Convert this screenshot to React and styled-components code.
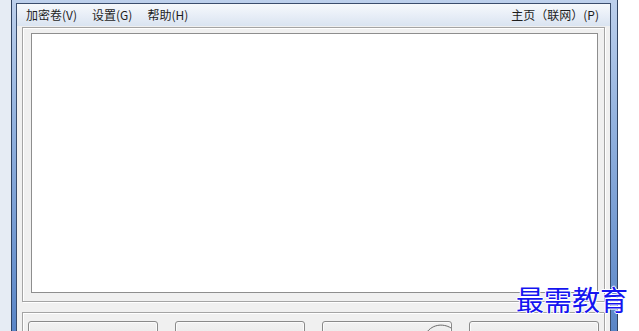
import React from "react";
import styled, { createGlobalStyle } from "styled-components";

const GlobalStyle = createGlobalStyle`
  *, *::before, *::after {
    box-sizing: border-box;
  }
  html, body {
    margin: 0;
    padding: 0;
    background: #ffffff;
    overflow: hidden;
  }
  body {
    font-family: "Noto Sans CJK SC", "Liberation Sans", sans-serif;
  }
`;

const Page = styled.div`
  position: relative;
  display: flex;
  width: 639px;
  height: 331px;
  overflow: hidden;
  background: #ffffff;
`;

const Desk = styled.div`
  width: ${(p) => p.$w}px;
  flex-shrink: 0;
  background: ${(p) => p.$bg};
`;

const Frame = styled.div`
  width: 607px;
  height: 340px;
  flex-shrink: 0;
  padding: 3px 6px 0 4px;
  border: 1px solid #2f4260;
  border-top: none;
  background: linear-gradient(180deg, #bdd0ec 0%, #94b3df 35%, #5884c6 100%);
`;

const Client = styled.div`
  height: 100%;
  display: flex;
  flex-direction: column;
  border: 1px solid #3a4d6c;
  border-bottom: none;
  background: #f0f0f0;
`;

const MenuBar = styled.div`
  height: 22px;
  flex-shrink: 0;
  display: flex;
  align-items: center;
  padding: 0 11px 0 9px;
  background: linear-gradient(180deg, #f6f9fc 0%, #e8eef7 50%, #dae4f1 100%);
  font-size: 12px;
  color: #1e1e1e;
`;

const MenuItem = styled.span`
  margin-right: ${(p) => (p.$right ? 0 : 15)}px;
  margin-left: ${(p) => (p.$right ? "auto" : "0")};
  white-space: nowrap;
  line-height: 22px;
`;

const Body = styled.div`
  flex: 1;
  display: flex;
  flex-direction: column;
  gap: 10px;
  padding: 1px 5px 0;
`;

const Group = styled.div`
  border: 1px solid #a4a4a4;
  box-shadow: inset 1px 1px 0 #ffffff, 1px 1px 0 #ffffff;
  padding: ${(p) => p.$pad};
  height: ${(p) => p.$h}px;
  flex-shrink: 0;
`;

const LogBox = styled.div`
  height: 100%;
  border: 1px solid #8e8e8e;
  background: #ffffff;
`;

const ButtonRow = styled.div`
  display: flex;
  gap: 17px;
`;

const Button = styled.div`
  width: 130px;
  height: 26px;
  border: 1px solid #8a8a8a;
  border-radius: 3px;
  box-shadow: inset 0 0 0 1px #fbfbfb;
  background: linear-gradient(180deg, #f2f2f2 0%, #ebebeb 50%, #dddddd 100%);
  position: relative;
  overflow: hidden;
`;

const Watermark = styled.div`
  position: absolute;
  left: 516px;
  top: 281px;
  font-family: "Noto Sans CJK SC", sans-serif;
  font-size: 28px;
  letter-spacing: 0px;
  color: #1414f0;
  line-height: 36px;
  text-shadow: 1px 0 0 #fff, -1px 0 0 #fff, 0 1px 0 #fff, 0 -1px 0 #fff;
  white-space: nowrap;
`;

const menus = ["加密卷(V)", "设置(G)", "帮助(H)"];

export default function App() {
  return (
    <>
      <GlobalStyle />
      <Page>
        <Desk $w={11} $bg="#e6ecf4" />
        <Frame>
          <Client>
            <MenuBar>
              {menus.map((m) => (
                <MenuItem key={m}>{m}</MenuItem>
              ))}
              <MenuItem $right>主页（联网）(P)</MenuItem>
            </MenuBar>
            <Body>
              <Group $h={275} $pad="5px 6px 8px 8px">
                <LogBox />
              </Group>
              <Group $h={40} $pad="8px 3px 0 5px">
                <ButtonRow>
                  <Button />
                  <Button />
                  <Button>
                    <svg width="30" height="14" viewBox="0 0 30 14" style={{ position: "absolute", left: 100, top: 0 }}>
                      <path d="M2 13 C8 2, 20 1, 28 6" fill="none" stroke="#6a6a6a" strokeWidth="1" />
                    </svg>
                  </Button>
                  <Button />
                </ButtonRow>
              </Group>
            </Body>
          </Client>
        </Frame>
        <Desk $w={21} $bg="#ffffff" />
        <Watermark>最需教育</Watermark>
      </Page>
    </>
  );
}
